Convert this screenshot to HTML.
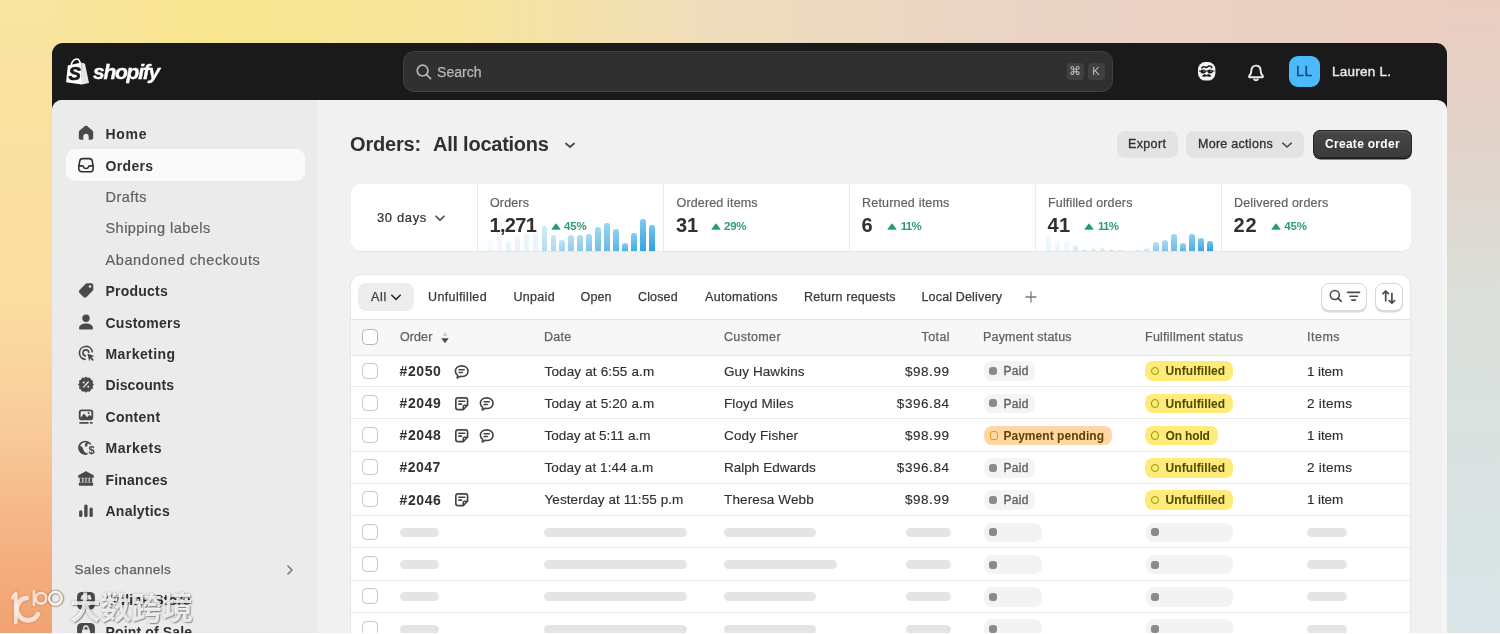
<!DOCTYPE html>
<html lang="en">
<head>
<meta charset="utf-8">
<title>Orders · Shopify</title>
<style>
*{box-sizing:border-box;margin:0;padding:0}
html,body{width:1500px;height:634px;overflow:hidden}
body{position:relative;font-family:"Liberation Sans",sans-serif;color:#303030;background:#f3dcb0;-webkit-font-smoothing:antialiased}
.abs{position:absolute}
/* background */
.bg{position:absolute;inset:0}
.bg1{background:linear-gradient(to right,#f9e4a1 0px,#f8e58e 220px,#f7e49c 460px,#eeddbd 720px,#e9d4c6 1020px,#ebcec1 1475px)}
.bgL{left:0;top:0;width:52px;height:634px;background:linear-gradient(to bottom,#f9e4a1 0px,#fbdda0 300px,#f8cd9c 420px,#f5b283 540px,#f2a271 634px)}
.bgR{left:1447px;top:0;width:53px;height:634px;background:linear-gradient(to bottom,#ebcec1 0px,#e2d4cb 150px,#dbdfda 300px,#d8e4e6 600px)}
/* window */
.win{will-change:transform;left:52px;top:43px;width:1395px;height:600px;background:#1a1a1a;border-radius:11px 11px 0 0;overflow:hidden}
.content{left:0;top:57px;width:1395px;height:560px;background:#f1f1f1;border-radius:10px 10px 0 0;overflow:hidden}
.edge{right:0;top:0;width:5.5px;height:560px;background:#f6f5f6}
.side{left:0;top:0;width:266px;height:560px;background:#ebebeb}
.t{position:absolute;white-space:nowrap;line-height:1}

/* topbar */
.logo{left:14px;top:15px;width:24px;height:28px}
.brand{left:41px;top:16px;font:italic bold 21px/26px "Liberation Sans",sans-serif;color:#fff;letter-spacing:-1.3px;-webkit-text-stroke:.35px #fff}
.search{left:351px;top:8px;width:710px;height:41px;border-radius:11px;background:#303030;border:1px solid #404040}
.search .ph{left:33px;top:13px;font-size:14px;color:#b8b8b8;-webkit-text-stroke:.25px #b8b8b8;letter-spacing:.3px}
.kbd{top:10.9px;height:17px;line-height:17px;border-radius:4px;background:#404040;color:#c0c0c0;font-size:11px;text-align:center;line-height:16px}
.avatar{left:1237px;top:13px;width:31px;height:31px;border-radius:9px;background:#4cbafa;color:#0a4a7a;font-size:14px;text-align:center;line-height:31px;letter-spacing:.6px;-webkit-text-stroke:.35px #0a4a7a}
.uname{left:1280px;top:22px;font-size:13.5px;color:#e6e6e6;-webkit-text-stroke:.45px #e6e6e6}

/* sidebar */
.sel{left:14px;top:49px;width:239px;height:31.5px;border-radius:9px;background:#fafafa}
.nav{left:53.5px;font-size:14px;font-weight:bold;color:#303030;letter-spacing:.1px}
.sub{left:53.5px;font-size:14.5px;margin-top:-.25px;color:#616161;letter-spacing:.25px;-webkit-text-stroke:.2px #616161}
.ico{left:23.7px;width:20px;height:20px}
.sect{left:22.5px;font-size:13.5px;margin-top:-.25px;color:#616161;letter-spacing:.3px;-webkit-text-stroke:.25px #616161}

/* main header */
.h1{font-size:20px;font-weight:bold;color:#303030;letter-spacing:-.1px}
.btn{top:30.5px;height:27px;border-radius:8px;background:#e3e3e3}
.btn .t{top:7.3px;font-size:12.5px;color:#303030;letter-spacing:.25px;-webkit-text-stroke:.3px #303030}
.btnp{left:1261px;top:30px;width:99px;height:28px;border-radius:8px;background:linear-gradient(#474747,#3a3a3a);box-shadow:inset 0 0 0 1px #262626,inset 0 1.5px 0 1px #585858,0 1.5px 0 0 #1a1a1a}
.btnp .t{left:12px;top:8px;font-size:12px;font-weight:bold;color:#fff;letter-spacing:.2px}
/* stats */
.stats{left:299px;top:84px;width:1060px;height:66.5px;border-radius:9px;background:#fff;overflow:hidden;box-shadow:0 1px 0 rgba(0,0,0,.05)}
.vdiv{top:0;width:1px;height:67px;background:#ebebeb}
.slab{top:13.2px;font-size:12.5px;color:#616161;letter-spacing:.3px;-webkit-text-stroke:.2px #616161}
.sval{top:31.4px;font-size:20px;font-weight:bold;color:#303030;letter-spacing:-.2px}
.tri{top:38.5px;width:10px;height:7px}
.pct{top:36.6px;font-size:11.5px;font-weight:bold;color:#2d9d78;letter-spacing:.2px}
.bar{position:absolute;bottom:0;width:5.6px;border-radius:2.8px 2.8px 0 0;background:linear-gradient(#74c6ef,#2f9fdb)}

/* table */
.card{left:299px;top:175px;width:1059px;height:400px;border-radius:10px 10px 0 0;background:#fff;overflow:hidden;box-shadow:0 0 0 1px rgba(0,0,0,.04)}
.allp{left:7px;top:8px;width:55.5px;height:27.5px;border-radius:8px;background:#ededed}
.tab{top:16.1px;font-size:12.5px;color:#3a3a3a;letter-spacing:.3px;-webkit-text-stroke:.25px #3a3a3a}
.ibtn{top:8px;height:28px;border-radius:8px;background:#fff;border:1px solid #d6d6d6;box-shadow:0 1.5px 0 0 #dcdcdc}
.thead{left:0;top:44px;width:1059px;height:36.6px;background:#f7f7f7;border-top:1px solid #e3e3e3;border-bottom:1px solid #e3e3e3}
.th{top:11.1px;font-size:12.5px;color:#616161;letter-spacing:.35px;-webkit-text-stroke:.25px #616161}
.row{left:0;width:1059px;height:32.2px;border-bottom:1px solid #ebebeb}
.cb{left:11px;width:16px;height:16px;border-radius:4.5px;border:1.3px solid #c4c4c4;background:#fff}
.td{top:9.5px;font-size:13.5px;color:#303030;letter-spacing:.3px;-webkit-text-stroke:.15px #303030}
.tdb{font-weight:bold;font-size:14px;top:8.8px;letter-spacing:.35px;-webkit-text-stroke:0}
.pill{top:6.4px;height:19.6px;border-radius:8px}
.pill .t{top:4.1px;font-size:12px;letter-spacing:.3px}
.paid{background:#f4f4f4}.paid .t{color:#616161;-webkit-text-stroke:.35px #616161}
.pend{background:#ffd6a4}.pend .t{color:#5e4200;font-weight:bold;letter-spacing:.2px}
.unf{background:#ffeb78}.unf .t{color:#4f4700;font-weight:bold;letter-spacing:.2px}
.sq{left:5.3px;top:5.9px;width:7.9px;height:7.9px;border-radius:3px;background:#8a8a8a}
.ring{left:5.6px;top:5.7px;width:8.4px;height:8.4px;border-radius:50%;border:1.6px solid #a08f0c}
.ringsq{left:5.8px;top:5.7px;width:8.2px;height:8.2px;border-radius:2.6px;border:1.6px solid #dc9a0a}
.sk{height:9px;border-radius:4.5px;background:#e4e4e4;top:11.6px}
.skp{top:6.4px;height:19.6px;border-radius:8px;background:#f3f3f3}
.ic16{width:17.4px;height:17.4px;top:7.5px;margin-left:-.9px}

/* watermark */
.wm{left:0;top:580px;width:210px;height:54px;pointer-events:none;filter:drop-shadow(0 0 1.2px rgba(150,70,20,.55))}
.wmt{will-change:transform;left:70px;top:591.2px;font:bold 30.6px/34px "Liberation Sans","Noto Sans CJK SC",sans-serif;color:rgba(255,255,255,.82);text-shadow:0 0 3px rgba(0,0,0,.3),1px 1px 1px rgba(0,0,0,.32);letter-spacing:.2px}
.bline{left:0;top:633px;width:1500px;height:1px;background:rgba(255,255,255,.88)}
</style>
</head>
<body>
<div class="bg bg1"></div>
<div class="abs bgL"></div>
<div class="abs bgR"></div>

<div class="abs win" id="win">
  <!-- TOPBAR -->
  <svg class="abs logo" viewBox="0 0 24 28">
    <path d="M5.2 7.4 C5.6 3.6 8.2 .9 10.6 .9 C12.8 .9 13.9 3 14.2 5.4" fill="none" stroke="#fff" stroke-width="1.5"/>
    <path d="M1.8 7.4 L15.6 4.4 L16 26.6 L.1 24.3 Z" fill="#fff"/>
    <path d="M15.6 4.6 L19 5.8 L23 25 L16 26.6 Z" fill="#e4e4e4"/>
    <text x="2.6" y="21.6" style="font:italic bold 18.5px 'Liberation Sans',sans-serif" fill="#1a1a1a" stroke="#1a1a1a" stroke-width=".7">S</text>
  </svg>
  <div class="t brand" style="letter-spacing:-1.25px">shopify</div>
  <div class="abs search">
    <svg class="abs" style="left:11px;top:11px;width:18px;height:18px" viewBox="0 0 18 18"><circle cx="7.6" cy="7.6" r="5.4" fill="none" stroke="#b5b5b5" stroke-width="1.7"/><path d="M11.6 11.6 L15.6 15.6" stroke="#b5b5b5" stroke-width="1.8" stroke-linecap="round"/></svg>
    <div class="t ph" style="letter-spacing:0.05px">Search</div>
    <div class="abs kbd" style="left:662.5px;width:17.5px;font-size:12px">⌘</div>
    <div class="abs kbd" style="left:683.5px;width:17px">K</div>
  </div>
  <!-- sidekick face -->
  <svg class="abs" style="left:1145px;top:18.4px;width:20px;height:21px" viewBox="0 0 20 21">
    <rect x="1" y="1" width="17.4" height="18.6" rx="7.4" fill="#f4f4f4"/>
    <path d="M4.8 7 C5.6 5.6 7 5.4 8.2 6.2 C9.6 7.1 10.6 5.2 12.2 5 C13.4 4.9 14.4 5.6 14.8 6.6" fill="none" stroke="#1a1a1a" stroke-width="1.5" stroke-linecap="round"/>
    <ellipse cx="6.2" cy="10.5" rx="2.7" ry="2.1" fill="#1a1a1a"/><ellipse cx="13.2" cy="10.5" rx="2.7" ry="2.1" fill="#1a1a1a"/>
    <path d="M2 10 L4.4 10.2 M8.4 10 L11 10 M15.2 10.2 L17.6 10" stroke="#1a1a1a" stroke-width="1"/>
    <circle cx="7" cy="10" r=".6" fill="#f4f4f4"/><circle cx="14" cy="10" r=".6" fill="#f4f4f4"/>
    <path d="M5 15.2 C6.4 13 8.6 13 9.7 14 C10.8 13 13 13 14.4 15.2 C12.8 16.2 11 15.8 9.7 15.3 C8.4 15.8 6.6 16.2 5 15.2 Z" fill="#1a1a1a"/>
  </svg>
  <!-- bell -->
  <svg class="abs" style="left:1194px;top:19.8px;width:20px;height:20px" viewBox="0 0 20 20">
    <path d="M10 2.6 C6.9 2.6 5.4 5 5.4 7.6 C5.4 10.4 4.6 11.6 3.2 13 C2.8 13.6 3.1 14.3 3.8 14.3 L16.2 14.3 C16.9 14.3 17.2 13.6 16.8 13 C15.4 11.6 14.6 10.4 14.6 7.6 C14.6 5 13.1 2.6 10 2.6 Z" fill="none" stroke="#ececec" stroke-width="1.9" stroke-linejoin="round"/>
    <path d="M8.2 16.2 C8.6 17.6 11.4 17.6 11.8 16.2" fill="none" stroke="#ececec" stroke-width="1.9" stroke-linecap="round"/>
  </svg>
  <div class="abs avatar">LL</div>
  <div class="t uname" style="letter-spacing:0.26px">Lauren L.</div>
  <div class="abs content" id="content">
    <div class="abs side" id="side">
      <div class="abs sel"></div>
      <svg class="abs ico" style="top:23.2px" viewBox="0 0 20 20"><path d="M10 2.7 C10.4 2.7 10.8 2.9 11.1 3.1 L16.6 7.8 C17 8.2 17.2 8.6 17.2 9.2 L17.2 14.8 C17.2 15.9 16.4 16.7 15.3 16.7 L12.7 16.7 L12.7 13.2 C12.7 11.7 11.5 10.7 10 10.7 C8.5 10.7 7.3 11.7 7.3 13.2 L7.3 16.7 L4.7 16.7 C3.6 16.7 2.8 15.9 2.8 14.8 L2.8 9.2 C2.8 8.6 3 8.2 3.4 7.8 L8.9 3.1 C9.2 2.9 9.6 2.7 10 2.7 Z" fill="#4a4a4a"/></svg>
      <div class="t nav" style="top:27.15px;letter-spacing:0.70px">Home</div>
      <svg class="abs ico" style="top:54.6px" viewBox="0 0 20 20"><path d="M6.6 3.6 L13.4 3.6 C15 3.6 15.9 4.4 16.2 5.8 L17.1 10.6 C17.2 11 17.2 11.4 17.2 11.8 L17.2 13.4 C17.2 15.6 16 16.8 13.8 16.8 L6.2 16.8 C4 16.8 2.8 15.6 2.8 13.4 L2.8 11.8 C2.8 11.4 2.8 11 2.9 10.6 L3.8 5.8 C4.1 4.4 5 3.6 6.6 3.6 Z" fill="none" stroke="#303030" stroke-width="1.6" stroke-linejoin="round"/><path d="M3 10.9 L6.2 10.9 C6.8 10.9 7.2 11.3 7.4 11.8 C7.8 12.9 8.8 13.5 10 13.5 C11.2 13.5 12.2 12.9 12.6 11.8 C12.8 11.3 13.2 10.9 13.8 10.9 L17 10.9" fill="none" stroke="#303030" stroke-width="1.6"/></svg>
      <div class="t nav" style="top:58.55px;letter-spacing:0.34px">Orders</div>
      <div class="t sub" style="top:89.95px;letter-spacing:0.47px">Drafts</div>
      <div class="t sub" style="top:121.35px;letter-spacing:0.45px">Shipping labels</div>
      <div class="t sub" style="top:152.75px;letter-spacing:0.60px">Abandoned checkouts</div>
      <svg class="abs ico" style="top:180.2px" viewBox="0 0 20 20"><path d="M11.2 3.2 L15.2 3.2 C16.4 3.2 17.3 4.1 17.3 5.3 L17.3 9.3 C17.3 9.9 17.1 10.4 16.7 10.8 L10.6 16.9 C9.7 17.8 8.3 17.8 7.4 16.9 L3.6 13.1 C2.7 12.2 2.7 10.8 3.6 9.9 L9.7 3.8 C10.1 3.4 10.6 3.2 11.2 3.2 Z" fill="#4a4a4a"/><circle cx="14" cy="6.5" r="1.25" fill="#ebebeb"/></svg>
      <div class="t nav" style="top:184.15px;letter-spacing:0.22px">Products</div>
      <svg class="abs ico" style="top:211.6px" viewBox="0 0 20 20"><circle cx="10" cy="6.3" r="3.7" fill="#4a4a4a"/><path d="M3 16.2 C3 13.4 6.1 11.4 10 11.4 C13.9 11.4 17 13.4 17 16.2 C17 17 16.5 17.5 15.7 17.5 L4.3 17.5 C3.5 17.5 3 17 3 16.2 Z" fill="#4a4a4a"/></svg>
      <div class="t nav" style="top:215.55px;letter-spacing:0.24px">Customers</div>
      <svg class="abs ico" style="top:243.0px" viewBox="0 0 20 20"><path d="M16.3 8.6 A6.5 6.5 0 1 0 9 16.4" fill="none" stroke="#4a4a4a" stroke-width="1.7" stroke-linecap="round"/><path d="M12.9 9.2 A3 3 0 1 0 9.4 12.8" fill="none" stroke="#4a4a4a" stroke-width="1.7" stroke-linecap="round"/><path d="M11.4 10.6 L18.3 13 L15.6 14.3 L17.8 16.8 L16.6 17.9 L14.3 15.5 L13.2 18.2 Z" fill="#4a4a4a"/></svg>
      <div class="t nav" style="top:246.95px;letter-spacing:0.43px">Marketing</div>
      <svg class="abs ico" style="top:274.4px" viewBox="0 0 20 20"><g transform="translate(10 10.6) scale(.9) translate(-10 -10.7)"><path d="M10 2.3 L11.9 3.6 L14.2 3.4 L15.1 5.5 L17.2 6.5 L16.9 8.8 L18.2 10.7 L16.9 12.6 L17.2 14.9 L15.1 15.9 L14.2 18 L11.9 17.8 L10 19.1 L8.1 17.8 L5.8 18 L4.9 15.9 L2.8 14.9 L3.1 12.6 L1.8 10.7 L3.1 8.8 L2.8 6.5 L4.9 5.5 L5.8 3.4 L8.1 3.6 Z" fill="#4a4a4a" stroke="#4a4a4a" stroke-width="1" stroke-linejoin="round"/><path d="M12.6 7.9 L7.4 13.5" stroke="#ebebeb" stroke-width="1.5" stroke-linecap="round"/><circle cx="7.5" cy="8.4" r="1.15" fill="#ebebeb"/><circle cx="12.5" cy="13" r="1.15" fill="#ebebeb"/></g></svg>
      <div class="t nav" style="top:278.35px;letter-spacing:0.11px">Discounts</div>
      <svg class="abs ico" style="top:305.8px" viewBox="0 0 20 20"><rect x="2.8" y="3.4" width="14.4" height="10.8" rx="2.8" fill="#4a4a4a"/><path d="M4.6 11.8 L4.6 6.6 C4.6 5.7 5.1 5.2 6 5.2 L14 5.2 C14.9 5.2 15.4 5.7 15.4 6.6 L15.4 10.6 L13.4 8.8 L11.2 11.2 L8 7.6 Z" fill="#ebebeb"/><circle cx="12.6" cy="7" r="1" fill="#4a4a4a"/><circle cx="12.8" cy="7.3" r=".9" fill="#4a4a4a" opacity="0"/><rect x="3.2" y="16" width="9.6" height="1.7" rx=".8" fill="#4a4a4a"/><rect x="13.8" y="16" width="3" height="1.7" rx=".8" fill="#4a4a4a"/></svg>
      <div class="t nav" style="top:309.75px;letter-spacing:0.28px">Content</div>
      <svg class="abs ico" style="top:337.2px" viewBox="0 0 20 20"><circle cx="9.2" cy="10.8" r="6.3" fill="#ebebeb" stroke="#4a4a4a" stroke-width="1.7"/><path d="M3.2 9.2 C5.2 8.6 6.8 10.2 7.2 12.2 C7.6 14.2 9.4 15 10.6 17 C6 18.2 2.2 14.2 3.2 9.2 Z" fill="#4a4a4a"/><path d="M9.8 5.2 L12.4 4.9 L10.9 9.7 L8.6 9.2 Z" fill="#4a4a4a"/><rect x="11.6" y="7.4" width="8" height="11.6" rx="3" fill="#ebebeb"/><text x="12.5" y="17.3" font-family="Liberation Sans, sans-serif" font-weight="bold" font-size="11" fill="#4a4a4a">$</text></svg>
      <div class="t nav" style="top:341.15px;letter-spacing:0.51px">Markets</div>
      <svg class="abs ico" style="top:368.6px" viewBox="0 0 20 20"><path d="M10 2.6 L17.4 6.6 L17.4 8.4 L2.6 8.4 L2.6 6.6 Z" fill="#4a4a4a" stroke="#4a4a4a" stroke-width=".8" stroke-linejoin="round"/><rect x="3.8" y="9.2" width="2.5" height="4.2" fill="#4a4a4a"/><rect x="7.4" y="9.2" width="2.1" height="4.2" fill="#4a4a4a"/><rect x="10.5" y="9.2" width="2.1" height="4.2" fill="#4a4a4a"/><rect x="13.7" y="9.2" width="2.5" height="4.2" fill="#4a4a4a"/><rect x="2.8" y="13.6" width="14.4" height="3.2" rx="1" fill="#4a4a4a"/></svg>
      <div class="t nav" style="top:372.55px;letter-spacing:0.21px">Finances</div>
      <svg class="abs ico" style="top:400.0px" viewBox="0 0 20 20"><rect x="3.1" y="10.3" width="3.3" height="6.7" rx="1.5" fill="#4a4a4a"/><rect x="8.2" y="4.6" width="3.4" height="12.4" rx="1.5" fill="#4a4a4a"/><rect x="13.5" y="7.5" width="3.3" height="9.5" rx="1.5" fill="#4a4a4a"/></svg>
      <div class="t nav" style="top:403.95px;letter-spacing:0.24px">Analytics</div>
      <div class="t sect" style="top:462.90px;letter-spacing:0.36px">Sales channels</div>
      <svg class="abs" style="left:232px;top:462.5px;width:12px;height:14px" viewBox="0 0 12 14"><path d="M4 3 L8 7 L4 11" fill="none" stroke="#7a7a7a" stroke-width="1.6" stroke-linecap="round" stroke-linejoin="round"/></svg>
      <svg class="abs ico" style="top:489.5px" viewBox="0 0 20 20"><rect x="1.1" y="1.9" width="17.8" height="17.6" rx="4.6" fill="#4a4a4a"/><path d="M4.6 8.4 L5.8 5 L14.2 5 L15.4 8.4 C15.4 10 13.4 10.2 12.7 9 C12 10.2 10.7 10.2 10 9 C9.3 10.2 8 10.2 7.3 9 C6.6 10.2 4.6 10 4.6 8.4 Z" fill="#ebebeb"/><path d="M5.8 11.4 L5.8 15.4 C5.8 15.9 6.1 16.2 6.6 16.2 L8.4 16.2 L8.4 13.2 L11.6 13.2 L11.6 16.2 L13.4 16.2 C13.9 16.2 14.2 15.9 14.2 15.4 L14.2 11.4 Z" fill="#ebebeb"/></svg>
      <div class="t nav" style="top:493.45px;letter-spacing:0.17px">Online Store</div>
      <svg class="abs ico" style="top:520.8px" viewBox="0 0 20 20"><rect x="1.1" y="1.9" width="17.8" height="17.6" rx="4.6" fill="#4a4a4a"/><path d="M6.2 8.4 L13.8 8.4 L14.6 16 L5.4 16 Z" fill="#ebebeb"/><path d="M7.6 8.6 C7.6 3.8 12.4 3.8 12.4 8.6" fill="none" stroke="#ebebeb" stroke-width="1.5"/></svg>
      <div class="t nav" style="top:524.75px;letter-spacing:0.15px">Point of Sale</div>
    </div>
    <div class="abs edge"></div>
    <!-- MAIN -->
    <div class="t h1" style="left:298px;top:33.8px;letter-spacing:-0.18px">Orders:</div>
    <div class="t h1" style="left:381px;top:33.8px;letter-spacing:-0.25px">All locations</div>
    <svg class="abs" style="left:510px;top:38px;width:14px;height:12px" viewBox="0 0 14 12"><path d="M3.9 5.5 L8 9 L12.1 5.5" fill="none" stroke="#4a4a4a" stroke-width="1.7" stroke-linecap="round" stroke-linejoin="round"/></svg>
    <div class="abs btn" style="left:1064.5px;width:61px"><div class="t" style="left:11.5px;letter-spacing:0.35px">Export</div></div>
    <div class="abs btn" style="left:1134px;width:118px"><div class="t" style="left:12px;letter-spacing:0.28px">More actions</div><svg class="abs" style="left:94.1px;top:8.7px;width:14px;height:12px" viewBox="0 0 14 12"><path d="M2.8 4.2 L7 8 L11.2 4.2" fill="none" stroke="#4a4a4a" stroke-width="1.6" stroke-linecap="round" stroke-linejoin="round"/></svg></div>
    <div class="abs btnp"><div class="t" style="letter-spacing:0.29px">Create order</div></div>
    <div class="abs stats">
        <div class="t" style="left:26px;top:26.5px;font-size:13px;color:#303030;-webkit-text-stroke:.2px #303030;letter-spacing:0.63px">30 days</div>
        <svg class="abs" style="left:82px;top:27.5px;width:14px;height:12px" viewBox="0 0 14 12"><path d="M3 4.2 L7 8.2 L11 4.2" fill="none" stroke="#4a4a4a" stroke-width="1.6" stroke-linecap="round" stroke-linejoin="round"/></svg>
        <div class="abs vdiv" style="left:126.0px"></div>
        <div class="abs vdiv" style="left:312.0px"></div>
        <div class="abs vdiv" style="left:497.5px"></div>
        <div class="abs vdiv" style="left:683.5px"></div>
        <div class="abs vdiv" style="left:869.5px"></div>
        <div class="bar" style="left:136.6px;height:12px;opacity:0.07"></div>
        <div class="bar" style="left:145.6px;height:37px;opacity:0.07"></div>
        <div class="bar" style="left:154.6px;height:10px;opacity:0.13"></div>
        <div class="bar" style="left:163.5px;height:15px;opacity:0.13"></div>
        <div class="bar" style="left:172.5px;height:18px;opacity:0.13"></div>
        <div class="bar" style="left:181.5px;height:18px;opacity:0.13"></div>
        <div class="bar" style="left:190.5px;height:25px;opacity:0.36"></div>
        <div class="bar" style="left:199.5px;height:16px;opacity:0.41"></div>
        <div class="bar" style="left:208.4px;height:11px;opacity:0.47"></div>
        <div class="bar" style="left:217.4px;height:16px;opacity:0.52"></div>
        <div class="bar" style="left:226.4px;height:16px;opacity:0.57"></div>
        <div class="bar" style="left:235.4px;height:16.5px;opacity:0.63"></div>
        <div class="bar" style="left:244.4px;height:24px;opacity:0.68"></div>
        <div class="bar" style="left:253.3px;height:28px;opacity:0.73"></div>
        <div class="bar" style="left:262.3px;height:22px;opacity:0.79"></div>
        <div class="bar" style="left:271.3px;height:8px;opacity:0.84"></div>
        <div class="bar" style="left:280.3px;height:18px;opacity:0.89"></div>
        <div class="bar" style="left:289.3px;height:32px;opacity:0.95"></div>
        <div class="bar" style="left:298.2px;height:26px;opacity:1.00"></div>
        <div class="bar" style="left:694.6px;height:16px;opacity:0.10"></div>
        <div class="bar" style="left:703.6px;height:10px;opacity:0.10"></div>
        <div class="bar" style="left:712.6px;height:10px;opacity:0.10"></div>
        <div class="bar" style="left:721.5px;height:6px;opacity:0.22"></div>
        <div class="bar" style="left:730.5px;height:1.5px;opacity:0.22"></div>
        <div class="bar" style="left:739.5px;height:2.5px;opacity:0.22"></div>
        <div class="bar" style="left:748.5px;height:2.5px;opacity:0.22"></div>
        <div class="bar" style="left:757.5px;height:1.5px;opacity:0.22"></div>
        <div class="bar" style="left:766.4px;height:1px;opacity:0.22"></div>
        <div class="bar" style="left:784.4px;height:1px;opacity:0.22"></div>
        <div class="bar" style="left:793.4px;height:2.5px;opacity:0.22"></div>
        <div class="bar" style="left:802.4px;height:9px;opacity:0.55"></div>
        <div class="bar" style="left:811.3px;height:11px;opacity:0.62"></div>
        <div class="bar" style="left:820.3px;height:17px;opacity:0.70"></div>
        <div class="bar" style="left:829.3px;height:7.5px;opacity:0.78"></div>
        <div class="bar" style="left:838.3px;height:17px;opacity:0.85"></div>
        <div class="bar" style="left:847.3px;height:12.5px;opacity:0.93"></div>
        <div class="bar" style="left:856.2px;height:10px;opacity:1.00"></div>
        <div class="t slab" style="left:139.0px;letter-spacing:0.14px">Orders</div>
        <div class="t sval" style="left:138.5px;letter-spacing:-0.70px">1,271</div>
        <svg class="abs tri" style="left:200.0px" viewBox="0 0 10 7"><path d="M5 .8 L9.2 6.2 L.8 6.2 Z" fill="#1f9a74" stroke="#1f9a74" stroke-width=".8" stroke-linejoin="round"/></svg>
        <div class="t pct" style="left:213.0px;letter-spacing:-0.12px">45%</div>
        <div class="t slab" style="left:325.5px;letter-spacing:0.16px">Ordered items</div>
        <div class="t sval" style="left:325.0px;letter-spacing:-0.15px">31</div>
        <svg class="abs tri" style="left:359.5px" viewBox="0 0 10 7"><path d="M5 .8 L9.2 6.2 L.8 6.2 Z" fill="#1f9a74" stroke="#1f9a74" stroke-width=".8" stroke-linejoin="round"/></svg>
        <div class="t pct" style="left:373.0px;letter-spacing:-0.22px">29%</div>
        <div class="t slab" style="left:511.0px;letter-spacing:0.20px">Returned items</div>
        <div class="t sval" style="left:510.5px">6</div>
        <svg class="abs tri" style="left:536.0px" viewBox="0 0 10 7"><path d="M5 .8 L9.2 6.2 L.8 6.2 Z" fill="#1f9a74" stroke="#1f9a74" stroke-width=".8" stroke-linejoin="round"/></svg>
        <div class="t pct" style="left:549.7px;letter-spacing:-0.70px">11%</div>
        <div class="t slab" style="left:697.0px;letter-spacing:0.16px">Fulfilled orders</div>
        <div class="t sval" style="left:696.5px;letter-spacing:0.35px">41</div>
        <svg class="abs tri" style="left:733.0px" viewBox="0 0 10 7"><path d="M5 .8 L9.2 6.2 L.8 6.2 Z" fill="#1f9a74" stroke="#1f9a74" stroke-width=".8" stroke-linejoin="round"/></svg>
        <div class="t pct" style="left:747.0px;letter-spacing:-0.70px">11%</div>
        <div class="t slab" style="left:883.0px;letter-spacing:0.17px">Delivered orders</div>
        <div class="t sval" style="left:882.5px;letter-spacing:1.00px">22</div>
        <svg class="abs tri" style="left:919.5px" viewBox="0 0 10 7"><path d="M5 .8 L9.2 6.2 L.8 6.2 Z" fill="#1f9a74" stroke="#1f9a74" stroke-width=".8" stroke-linejoin="round"/></svg>
        <div class="t pct" style="left:933.3px;letter-spacing:-0.12px">45%</div>
      </div>
    <!-- TABLE -->
    <div class="abs card">
      <div class="abs allp"></div>
      <div class="t tab" style="left:20.0px;letter-spacing:0.65px">All</div>
      <div class="t tab" style="left:77.0px;letter-spacing:0.37px">Unfulfilled</div>
      <div class="t tab" style="left:162.5px;letter-spacing:0.30px">Unpaid</div>
      <div class="t tab" style="left:229.6px;letter-spacing:0.10px">Open</div>
      <div class="t tab" style="left:287.0px;letter-spacing:0.14px">Closed</div>
      <div class="t tab" style="left:354.0px;letter-spacing:0.31px">Automations</div>
      <div class="t tab" style="left:453.0px;letter-spacing:0.19px">Return requests</div>
      <div class="t tab" style="left:570.5px;letter-spacing:0.16px">Local Delivery</div>
      <svg class="abs" style="left:38px;top:16px;width:14px;height:12px" viewBox="0 0 14 12"><path d="M2.8 4.2 L7 8.4 L11.2 4.2" fill="none" stroke="#303030" stroke-width="1.6" stroke-linecap="round" stroke-linejoin="round"/></svg>
      <svg class="abs" style="left:673px;top:15px;width:14px;height:14px" viewBox="0 0 14 14"><path d="M7 2 L7 12 M2 7 L12 7" stroke="#7a7a7a" stroke-width="1.3" stroke-linecap="round"/></svg>
      <div class="abs ibtn" style="left:970px;width:45.5px"><svg class="abs" style="left:5px;top:3.4px;width:36px;height:18px" viewBox="0 0 36 18"><circle cx="7.8" cy="8" r="4.5" fill="none" stroke="#4a4a4a" stroke-width="1.6"/><path d="M11.2 11.4 L14.2 14.4" stroke="#4a4a4a" stroke-width="1.7" stroke-linecap="round"/><path d="M20.6 5.4 L32.6 5.4 M22.8 9.3 L30.4 9.3 M24.8 13.1 L28.4 13.1" stroke="#4a4a4a" stroke-width="1.6" stroke-linecap="round"/></svg></div>
      <div class="abs ibtn" style="left:1024px;width:28px"><svg class="abs" style="left:4px;top:4px;width:18px;height:18px" viewBox="0 0 18 18"><path d="M5.7 12.8 L5.7 3 M3 5.7 L5.7 3 L8.4 5.7 M11.9 5.4 L11.9 15.2 M9.2 12.5 L11.9 15.2 L14.6 12.5" fill="none" stroke="#4a4a4a" stroke-width="1.7" stroke-linecap="round" stroke-linejoin="round"/></svg></div>
      <div class="abs thead"><div class="abs cb" style="top:9.4px;border-color:#b4b4b4"></div><div class="t th" style="left:49.0px;letter-spacing:0.09px">Order</div><div class="t th" style="left:193.0px;letter-spacing:0.23px">Date</div><div class="t th" style="left:373.0px;letter-spacing:0.34px">Customer</div><div class="t th" style="left:632.0px;letter-spacing:0.19px">Payment status</div><div class="t th" style="left:794.0px;letter-spacing:0.25px">Fulfillment status</div><div class="t th" style="left:956.0px;letter-spacing:0.51px">Items</div><div class="t th" style="right:460.0px;letter-spacing:0.42px">Total</div><svg class="abs" style="left:88px;top:11px;width:12px;height:14px" viewBox="0 0 12 14"><path d="M6 1.5 L8.5 4.8 L3.5 4.8 Z" fill="#c4c4c4"/><path d="M6 11.8 L9.2 7.6 L2.8 7.6 Z" fill="#4a4a4a" stroke="#4a4a4a" stroke-width=".6" stroke-linejoin="round"/></svg></div>
      <div class="abs row" style="top:80.0px"><div class="abs cb" style="top:7.6px"></div><div class="t td tdb" style="left:48.5px;letter-spacing:0.62px">#2050</div><svg class="abs ic16" style="left:103.0px" viewBox="0 0 16 16"><path d="M8 2.6 C11.4 2.6 13.8 4.8 13.8 7.6 C13.8 10.4 11.4 12.4 8 12.4 C7.5 12.4 7 12.4 6.6 12.3 L4 13.8 L4.2 11.2 C3 10.4 2.2 9.1 2.2 7.6 C2.2 4.8 4.6 2.6 8 2.6 Z" fill="none" stroke="#444" stroke-width="1.5" stroke-linejoin="round"/><path d="M5.6 6.2 L10.4 6.2 M5.6 8.8 L8.6 8.8" stroke="#444" stroke-width="1.4" stroke-linecap="round"/></svg><div class="t td" style="left:193.5px;letter-spacing:0.15px">Today at 6:55 a.m</div><div class="t td" style="left:373px;letter-spacing:0.10px">Guy Hawkins</div><div class="t td" style="right:460.5px;letter-spacing:0.54px">$98.99</div><div class="abs pill paid" style="left:633px;width:51px"><div class="abs sq"></div><div class="t" style="left:19.6px;letter-spacing:0.26px">Paid</div></div><div class="abs pill unf" style="left:794px;width:88px"><div class="abs ring"></div><div class="t" style="left:20.6px;letter-spacing:0.09px">Unfulfilled</div></div><div class="t td" style="left:956px;letter-spacing:-0.11px">1 item</div></div>
      <div class="abs row" style="top:112.2px"><div class="abs cb" style="top:7.6px"></div><div class="t td tdb" style="left:48.5px;letter-spacing:0.62px">#2049</div><svg class="abs ic16" style="left:103.0px" viewBox="0 0 16 16"><path d="M4.6 2.6 L11.4 2.6 C12.5 2.6 13.4 3.5 13.4 4.6 L13.4 9.4 L9.4 13.4 L4.6 13.4 C3.5 13.4 2.6 12.5 2.6 11.4 L2.6 4.6 C2.6 3.5 3.5 2.6 4.6 2.6 Z M13.2 9.4 L10.6 9.4 C9.9 9.4 9.4 9.9 9.4 10.6 L9.4 13.2" fill="none" stroke="#444" stroke-width="1.5" stroke-linejoin="round"/><path d="M5.4 5.8 L10.6 5.8 M5.4 8.4 L7.8 8.4" stroke="#444" stroke-width="1.5" stroke-linecap="round"/></svg><svg class="abs ic16" style="left:127.5px" viewBox="0 0 16 16"><path d="M8 2.6 C11.4 2.6 13.8 4.8 13.8 7.6 C13.8 10.4 11.4 12.4 8 12.4 C7.5 12.4 7 12.4 6.6 12.3 L4 13.8 L4.2 11.2 C3 10.4 2.2 9.1 2.2 7.6 C2.2 4.8 4.6 2.6 8 2.6 Z" fill="none" stroke="#444" stroke-width="1.5" stroke-linejoin="round"/><path d="M5.6 6.2 L10.4 6.2 M5.6 8.8 L8.6 8.8" stroke="#444" stroke-width="1.4" stroke-linecap="round"/></svg><div class="t td" style="left:193.5px;letter-spacing:0.15px">Today at 5:20 a.m</div><div class="t td" style="left:373px;letter-spacing:0.12px">Floyd Miles</div><div class="t td" style="right:460.5px;letter-spacing:0.55px">$396.84</div><div class="abs pill paid" style="left:633px;width:51px"><div class="abs sq"></div><div class="t" style="left:19.6px;letter-spacing:0.26px">Paid</div></div><div class="abs pill unf" style="left:794px;width:88px"><div class="abs ring"></div><div class="t" style="left:20.6px;letter-spacing:0.09px">Unfulfilled</div></div><div class="t td" style="left:956px;letter-spacing:0.26px">2 items</div></div>
      <div class="abs row" style="top:144.4px"><div class="abs cb" style="top:7.6px"></div><div class="t td tdb" style="left:48.5px;letter-spacing:0.62px">#2048</div><svg class="abs ic16" style="left:103.0px" viewBox="0 0 16 16"><path d="M4.6 2.6 L11.4 2.6 C12.5 2.6 13.4 3.5 13.4 4.6 L13.4 9.4 L9.4 13.4 L4.6 13.4 C3.5 13.4 2.6 12.5 2.6 11.4 L2.6 4.6 C2.6 3.5 3.5 2.6 4.6 2.6 Z M13.2 9.4 L10.6 9.4 C9.9 9.4 9.4 9.9 9.4 10.6 L9.4 13.2" fill="none" stroke="#444" stroke-width="1.5" stroke-linejoin="round"/><path d="M5.4 5.8 L10.6 5.8 M5.4 8.4 L7.8 8.4" stroke="#444" stroke-width="1.5" stroke-linecap="round"/></svg><svg class="abs ic16" style="left:127.5px" viewBox="0 0 16 16"><path d="M8 2.6 C11.4 2.6 13.8 4.8 13.8 7.6 C13.8 10.4 11.4 12.4 8 12.4 C7.5 12.4 7 12.4 6.6 12.3 L4 13.8 L4.2 11.2 C3 10.4 2.2 9.1 2.2 7.6 C2.2 4.8 4.6 2.6 8 2.6 Z" fill="none" stroke="#444" stroke-width="1.5" stroke-linejoin="round"/><path d="M5.6 6.2 L10.4 6.2 M5.6 8.8 L8.6 8.8" stroke="#444" stroke-width="1.4" stroke-linecap="round"/></svg><div class="t td" style="left:193.5px;letter-spacing:-0.02px">Today at 5:11 a.m</div><div class="t td" style="left:373px;letter-spacing:0.13px">Cody Fisher</div><div class="t td" style="right:460.5px;letter-spacing:0.54px">$98.99</div><div class="abs pill pend" style="left:633px;width:128px"><div class="abs ringsq"></div><div class="t" style="left:19.4px;letter-spacing:0.04px">Payment pending</div></div><div class="abs pill unf" style="left:794px;width:73px"><div class="abs ring"></div><div class="t" style="left:20.6px;letter-spacing:-0.17px">On hold</div></div><div class="t td" style="left:956px;letter-spacing:-0.11px">1 item</div></div>
      <div class="abs row" style="top:176.6px"><div class="abs cb" style="top:7.6px"></div><div class="t td tdb" style="left:48.5px;letter-spacing:0.47px">#2047</div><div class="t td" style="left:193.5px;letter-spacing:0.09px">Today at 1:44 a.m</div><div class="t td" style="left:373px;letter-spacing:0.02px">Ralph Edwards</div><div class="t td" style="right:460.5px;letter-spacing:0.55px">$396.84</div><div class="abs pill paid" style="left:633px;width:51px"><div class="abs sq"></div><div class="t" style="left:19.6px;letter-spacing:0.26px">Paid</div></div><div class="abs pill unf" style="left:794px;width:88px"><div class="abs ring"></div><div class="t" style="left:20.6px;letter-spacing:0.09px">Unfulfilled</div></div><div class="t td" style="left:956px;letter-spacing:0.26px">2 items</div></div>
      <div class="abs row" style="top:208.8px"><div class="abs cb" style="top:7.6px"></div><div class="t td tdb" style="left:48.5px;letter-spacing:0.62px">#2046</div><svg class="abs ic16" style="left:103.0px" viewBox="0 0 16 16"><path d="M4.6 2.6 L11.4 2.6 C12.5 2.6 13.4 3.5 13.4 4.6 L13.4 9.4 L9.4 13.4 L4.6 13.4 C3.5 13.4 2.6 12.5 2.6 11.4 L2.6 4.6 C2.6 3.5 3.5 2.6 4.6 2.6 Z M13.2 9.4 L10.6 9.4 C9.9 9.4 9.4 9.9 9.4 10.6 L9.4 13.2" fill="none" stroke="#444" stroke-width="1.5" stroke-linejoin="round"/><path d="M5.4 5.8 L10.6 5.8 M5.4 8.4 L7.8 8.4" stroke="#444" stroke-width="1.5" stroke-linecap="round"/></svg><div class="t td" style="left:193.5px;letter-spacing:0.07px">Yesterday at 11:55 p.m</div><div class="t td" style="left:373px;letter-spacing:0.13px">Theresa Webb</div><div class="t td" style="right:460.5px;letter-spacing:0.54px">$98.99</div><div class="abs pill paid" style="left:633px;width:51px"><div class="abs sq"></div><div class="t" style="left:19.6px;letter-spacing:0.26px">Paid</div></div><div class="abs pill unf" style="left:794px;width:88px"><div class="abs ring"></div><div class="t" style="left:20.6px;letter-spacing:0.09px">Unfulfilled</div></div><div class="t td" style="left:956px;letter-spacing:-0.11px">1 item</div></div>
      <div class="abs row" style="top:241.2px"><div class="abs cb" style="top:7.6px"></div><div class="abs sk" style="left:49px;width:39px"></div><div class="abs sk" style="left:192.5px;width:143px"></div><div class="abs sk" style="left:372.5px;width:92.5px"></div><div class="abs sk" style="left:554.5px;width:45px"></div><div class="abs skp" style="left:632.5px;width:58px"><div class="abs sq"></div></div><div class="abs skp" style="left:794.5px;width:87.5px"><div class="abs sq"></div></div><div class="abs sk" style="left:956px;width:40px"></div></div>
      <div class="abs row" style="top:273.5px"><div class="abs cb" style="top:7.6px"></div><div class="abs sk" style="left:49px;width:39px"></div><div class="abs sk" style="left:192.5px;width:143px"></div><div class="abs sk" style="left:372.5px;width:113px"></div><div class="abs sk" style="left:554.5px;width:45px"></div><div class="abs skp" style="left:632.5px;width:58px"><div class="abs sq"></div></div><div class="abs skp" style="left:794.5px;width:87.5px"><div class="abs sq"></div></div><div class="abs sk" style="left:956px;width:40px"></div></div>
      <div class="abs row" style="top:305.8px"><div class="abs cb" style="top:7.6px"></div><div class="abs sk" style="left:49px;width:39px"></div><div class="abs sk" style="left:192.5px;width:143px"></div><div class="abs sk" style="left:372.5px;width:92.5px"></div><div class="abs sk" style="left:554.5px;width:45px"></div><div class="abs skp" style="left:632.5px;width:58px"><div class="abs sq"></div></div><div class="abs skp" style="left:794.5px;width:87.5px"><div class="abs sq"></div></div><div class="abs sk" style="left:956px;width:40px"></div></div>
      <div class="abs row" style="top:338.0px"><div class="abs cb" style="top:7.6px"></div><div class="abs sk" style="left:49px;width:39px"></div><div class="abs sk" style="left:192.5px;width:143px"></div><div class="abs sk" style="left:372.5px;width:92.5px"></div><div class="abs sk" style="left:554.5px;width:45px"></div><div class="abs skp" style="left:632.5px;width:58px"><div class="abs sq"></div></div><div class="abs skp" style="left:794.5px;width:87.5px"><div class="abs sq"></div></div><div class="abs sk" style="left:956px;width:40px"></div></div>
    </div>
  </div>
</div>
<svg class="abs wm" viewBox="0 0 210 54">
  <g fill="none" stroke="rgba(255,240,232,.86)" stroke-linecap="round">
    <path d="M12.6 17.6 L15.8 13.8 L15.8 42.2" stroke-width="3.9" stroke-linejoin="round"/>
    <path d="M26.6 17.9 A11.2 11.2 0 1 0 38.0 34.1" stroke-width="4.9"/>
    <path d="M33.9 11 L33.9 25" stroke-width="2.7"/>
    <circle cx="41" cy="18.3" r="5.3" stroke-width="2.7"/>
  </g>
  <circle cx="55.8" cy="18.6" r="6.3" fill="none" stroke="rgba(90,90,90,.3)" stroke-width="4.4"/>
  <circle cx="55.4" cy="18.3" r="6.3" fill="none" stroke="rgba(255,255,255,.9)" stroke-width="2.5"/>
</svg>
<div class="t wmt">大数跨境</div>
<div class="abs bline"></div>
</body>
</html>
